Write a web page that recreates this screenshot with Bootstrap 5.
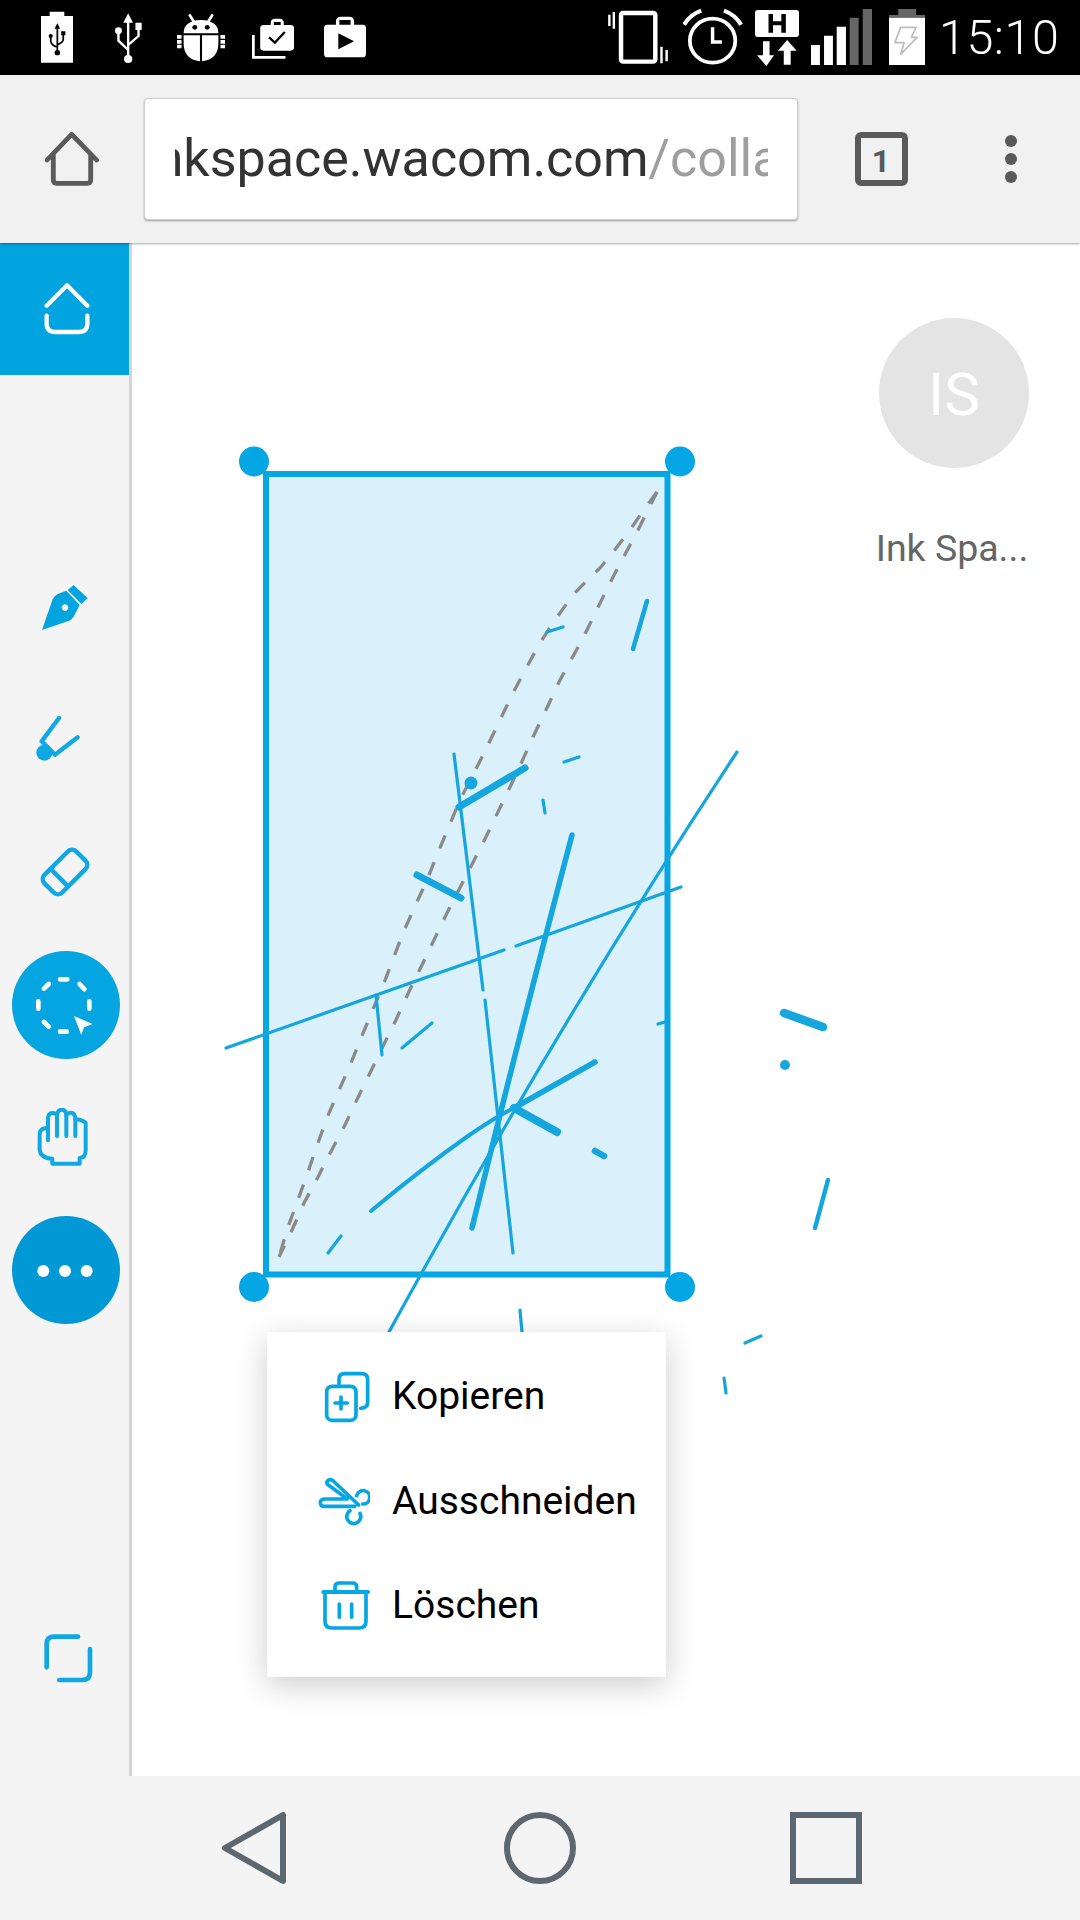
<!doctype html>
<html lang="de">

<head>
  <meta charset="utf-8">
  <meta name="viewport" content="width=device-width, initial-scale=1">
  <title>Ink Space</title>
  <link href="https://cdn.jsdelivr.net/npm/bootstrap@5.3.0/dist/css/bootstrap.min.css" rel="stylesheet">
  <style>
    body {
      font-family: Roboto, "Liberation Sans", sans-serif;
      background-color: #fff;
      width: 1080px;
      height: 1920px;
      overflow: hidden;
    }

    svg { display: block; flex-shrink: 0; }

    /* status bar */
    .status-strip { height: 75px; background-color: #000; color: #fff; }
    .sb-batt { margin-left: 41px; }
    .sb-usb { margin-left: 42px; }
    .sb-bug { margin-left: 35px; }
    .sb-check { margin-left: 27px; }
    .sb-play { margin-left: 30px; }
    .sb-vib { margin-left: 242px; }
    .sb-alarm { margin-left: 15px; }
    .sb-data { margin-left: 12.5px; }
    .sb-signal { margin-left: 12px; }
    .sb-charge { margin-left: 17px; }
    .clock-text { margin-left: 14px; font-size: 48.5px; font-weight: 300; line-height: 75px; letter-spacing: .5px; }

    /* browser toolbar */
    .chrome-bar {
      height: 168px;
      background-color: #f1f1f1;
      box-shadow: 0 1px 2px rgba(0, 0, 0, .35);
      z-index: 2;
    }
    .bar-home { margin-left: 45px; }
    .url-box {
      width: 654.5px;
      height: 122px;
      margin-left: 44.5px;
      padding: 0 29px 0 30.5px;
      background-color: #fff;
      border: 1px solid #cfcfcf;
      border-radius: 4px;
      box-shadow: 0 1px 2px rgba(0, 0, 0, .35);
      font-size: 52px;
      color: #333;
    }
    .url-clip { line-height: 120px; white-space: nowrap; }
    .url-scroll { margin-left: -33px; }
    .url-path { color: #9e9e9e; }
    .bar-tabs { margin-left: 57px; }
    .bar-dots { margin-left: 97px; }

    /* work area */
    .work-area { height: 1533px; }
    .tool-rail {
      width: 132px;
      background-color: #f4f4f4;
      border-right: 3px solid #d6d6d6;
    }
    .rail-home { height: 132px; padding-left: 4px; background-color: #02a4df; }
    .rail-tools { margin-top: 166px; }
    .rail-slot { height: 132.5px; }
    .rail-shift-round { padding-left: 3px; }
    .rail-shift-brush { padding-right: 12px; }
    .rail-shift-hand { padding-right: 3px; }
    .rail-bottom { margin-bottom: 93px; padding-left: 8px; }
    .ink-stage { width: 948px; }
    .ink-layer { position: absolute; left: 0; top: 0; }
    .ink-soft { filter: blur(.6px); }
    .profile-box { width: 150px; margin: 75px 51px 0 auto; position: relative; }
    .profile-disc { width: 150px; height: 150px; padding-top: 4px; background-color: #e4e4e4; color: #fff; font-size: 60px; }
    .profile-name { margin: 57px 0 0 -4px; font-size: 37.5px; line-height: 46px; color: #666; white-space: nowrap; }

    /* selection menu */
    .sel-menu {
      position: absolute;
      left: 135px;
      top: 1089px;
      width: 399px;
      height: 345px;
      padding: 12px 0 19px;
      background-color: #fff;
      box-shadow: 0 8px 30px rgba(0, 0, 0, .2);
    }
    .sel-item {
      height: 105px;
      padding: 0 0 0 48px;
      gap: 22px;
      border: 0;
      background: transparent;
      font-size: 39px;
      color: #000;
    }

    /* android nav */
    .nav-strip { height: 144px; background-color: #f4f4f4; gap: 214px; }
  </style>
</head>

<body>
  <!-- Status bar -->
  <div class="status-strip d-flex align-items-center">
    <svg class="sb-batt" width="32" height="75" viewBox="120 0 92 225" preserveAspectRatio="none">
      <path fill="#fff" d="M120 48H145V35H187V48H212V188H120Z"/>
      <path fill="none" stroke="#000" stroke-width="5" d="M167 85V155M148 110V122Q148 134 167 142M184 100V118Q184 128 167 134"/>
      <path d="M167 70l8 16h-16zM178 94h12v12h-12z"/><circle cx="148" cy="108" r="6"/><circle cx="167" cy="158" r="8"/>
    </svg>
    <svg class="sb-usb" width="27" height="75" viewBox="335 0 78 225" preserveAspectRatio="none">
      <g fill="#fff"><path d="M373 40l14 28h-28zM394 68h18v22h-18z"/><circle cx="345" cy="92" r="10"/><circle cx="373" cy="177" r="12"/></g>
      <path fill="none" stroke="#fff" stroke-width="7" d="M373 60V175M345 95V122L373 150M403 85V108L373 135"/>
    </svg>
    <svg class="sb-bug" width="48" height="75" viewBox="515 0 138 225" preserveAspectRatio="none">
      <g fill="#fff">
        <path d="M534 100Q534 62 584 60Q634 62 634 100Z"/>
        <path d="M534 106H581V184Q534 178 534 130ZM587 106H634V130Q634 178 587 184Z"/>
        <path d="M515 105h13v11h-13zM515 120h13v11h-13zM515 134h13v11h-13zM640 105h13v11h-13zM640 120h13v11h-13zM640 134h13v11h-13z"/>
      </g>
      <path stroke="#fff" stroke-width="8" stroke-linecap="round" d="M552 46L564 66M616 46L604 66"/>
      <circle cx="566" cy="82" r="7"/><circle cx="602" cy="82" r="7"/>
    </svg>
    <svg class="sb-check" width="42" height="75" viewBox="732 0 123 225" preserveAspectRatio="none">
      <path fill="none" stroke="#fff" stroke-width="8" d="M736 105V172H830"/>
      <path fill="#fff" d="M766 75H787V68Q787 56 800 56H812Q825 56 825 68V75H845Q855 75 855 85V142Q855 152 845 152H766Q756 152 756 142V85Q756 75 766 75ZM796 75H816V66H796Z" fill-rule="evenodd"/>
      <path fill="none" stroke="#000" stroke-width="7" d="M782 112L799 128L828 96"/>
    </svg>
    <svg class="sb-play" width="42" height="75" viewBox="940 0 123 225" preserveAspectRatio="none">
      <path fill="#fff" fill-rule="evenodd" d="M950 74H975V64Q975 50 990 50H1014Q1028 50 1028 64V74H1053Q1063 74 1063 84V161Q1063 172 1053 172H950Q940 172 940 161V84Q940 74 950 74ZM985 74H1018V60H985Z"/>
      <path d="M982 100L1028 124L982 148Z"/>
    </svg>

    <svg class="sb-vib" width="60" height="75" viewBox="197 0 175 225" preserveAspectRatio="none">
      <rect x="235" y="39" width="100" height="146" rx="6" fill="none" stroke="#fff" stroke-width="13"/>
      <path stroke="#fff" stroke-width="7" d="M201 44V78M214 36V86M353 140V190M368 150V184"/>
    </svg>
    <svg class="sb-alarm" width="59.5" height="75" viewBox="415 0 173 225" preserveAspectRatio="none">
      <circle cx="501" cy="122" r="66" fill="none" stroke="#fff" stroke-width="11"/>
      <path fill="none" stroke="#fff" stroke-width="10" d="M501 82V126H528"/>
      <path fill="none" stroke="#fff" stroke-width="12" d="M418 74Q436 44 468 32M534 32Q566 44 584 74"/>
    </svg>
    <svg class="sb-data" width="44" height="75" viewBox="625 0 127 225" preserveAspectRatio="none">
      <rect x="625" y="30" width="127" height="81" rx="8" fill="#fff"/>
      <path d="M664 42h13v22h24v-22h13v56h-13v-22h-24v22h-13z"/>
      <path fill="#fff" d="M648 124h19v42h13l-22 32-27-32h17zM708 194v-42h-17l27-32 27 32h-17v42z"/>
    </svg>
    <svg class="sb-signal" width="61" height="75" viewBox="787 0 178 225" preserveAspectRatio="none">
      <path fill="#fff" d="M787 135h26v60h-26zM825 107h26v88h-26zM862 80h27v115h-27z"/>
      <path fill="#666" d="M900 53h26v142h-26zM938 27h27v168h-27z"/>
    </svg>
    <svg class="sb-charge" width="36" height="75" viewBox="1013 0 105 225" preserveAspectRatio="none">
      <path fill="#666" d="M1040 27h52v18h26v8h-105v-8h27z"/>
      <path fill="#fff" d="M1013 53h105v142h-105z"/>
      <path fill="none" stroke="#bdbdbd" stroke-width="5" stroke-linejoin="round" d="M1047 82H1092L1078 112H1095L1047 163L1057 128H1030Z"/>
    </svg>
    <span class="clock-text">15:10</span>
  </div>

  <!-- Browser toolbar -->
  <div class="chrome-bar d-flex align-items-center position-relative">
    <svg class="bar-home" width="54" height="54" viewBox="132 396 156 162" preserveAspectRatio="none">
      <path fill="none" stroke="#5a5a5a" stroke-width="14" stroke-linejoin="round" stroke-linecap="round" d="M138 480L209 403L281 480M156 465V540Q156 550 166 550H254Q264 550 264 540V465"/>
    </svg>
    <div class="url-box">
      <div class="url-clip overflow-hidden"><div class="url-scroll">inkspace.wacom.com<span class="url-path">/collaboration</span></div></div>
    </div>
    <svg class="bar-tabs" width="53" height="54" viewBox="0 0 53 54">
      <rect x="3" y="3" width="47" height="48" rx="3" fill="none" stroke="#5a5a5a" stroke-width="6"/>
      <text x="26" y="40" text-anchor="middle" font-family="Roboto, sans-serif" font-size="32" font-weight="700" fill="#5a5a5a">1</text>
    </svg>
    <svg class="bar-dots" width="12" height="48" viewBox="0 0 12 48" fill="#5a5a5a">
      <circle cx="6" cy="6" r="6"/><circle cx="6" cy="24" r="6"/><circle cx="6" cy="42" r="6"/>
    </svg>
  </div>

  <div class="work-area d-flex">
    <!-- Tool rail -->
    <div class="tool-rail d-flex flex-column flex-shrink-0">
      <div class="rail-home d-flex align-items-center justify-content-center">
        <svg width="46" height="54" viewBox="130 135 140 160" fill="none" stroke="#fff" stroke-width="13" stroke-linecap="round">
          <path stroke-linejoin="round" d="M138 205L200 143L262 205M138 235V260Q138 285 165 285H235Q262 285 262 260V235"/>
        </svg>
      </div>
      <div class="rail-tools d-flex flex-column">
        <div class="rail-slot d-flex align-items-center justify-content-center">
          <svg width="48" height="46" viewBox="120 1032 144 138" fill="#02a4df">
            <path fill-rule="evenodd" d="M123 1170L155 1078Q159 1068 170 1062L196 1052L236 1095L218 1130Q212 1140 200 1144ZM192 1093a10 10 0 1 0 .1 0Z"/>
            <path d="M218 1035L260 1075L241 1092L200 1050Z"/>
          </svg>
        </div>
        <div class="rail-slot rail-shift-brush d-flex align-items-center justify-content-center">
          <svg width="48" height="48" viewBox="50 84 144 144" fill="none" stroke="#10a8e2" stroke-width="13" stroke-linecap="round" stroke-linejoin="round">
            <path d="M122 90L70 160L110 200L178 148"/>
            <circle cx="78" cy="194" r="24" fill="#10a8e2" stroke="none"/>
          </svg>
        </div>
        <div class="rail-slot d-flex align-items-center justify-content-center">
          <svg width="54" height="54" viewBox="0 0 54 54" fill="none" stroke="#10a8e2" stroke-width="4.5">
            <g transform="translate(27 27) rotate(-45)">
              <rect x="-22.5" y="-12.5" width="45" height="25" rx="6"/>
              <path d="M-8 -13V13"/>
            </g>
          </svg>
        </div>
        <div class="rail-slot rail-shift-round d-flex align-items-center justify-content-center">
          <svg width="108" height="108" viewBox="36 93 324 324">
            <circle cx="198" cy="255" r="162" fill="#04a5e0"/>
            <path fill="none" stroke="#fff" stroke-width="14" stroke-linecap="round" d="M180 178H202M239 192L253 208M268 244V266M180 335H200M132 306L146 320M115 244V266M132 206L146 192"/>
            <path fill="#fff" d="M222 288L278 312L252 322L244 345Z"/>
          </svg>
        </div>
        <div class="rail-slot rail-shift-hand d-flex align-items-center justify-content-center">
          <svg width="52" height="58" viewBox="22 28 156 174" fill="none" stroke="#10a8e2" stroke-width="12" stroke-linecap="round" stroke-linejoin="round">
            <path d="M68 195V180Q30 178 30 150V108Q30 88 52 88M55 125V62Q55 43 68 43Q78 43 82 50Q84 33 96 33Q108 33 110 48Q116 42 124 42Q136 42 137 62Q150 60 168 72V155Q168 178 150 178V195H68"/>
            <path d="M82 50V112M110 50V112M137 62V112"/>
          </svg>
        </div>
        <div class="rail-slot rail-shift-round d-flex align-items-center justify-content-center">
          <svg width="108" height="108" viewBox="36 885 324 324">
            <circle cx="198" cy="1047" r="162" fill="#0099d6"/>
            <g fill="#fff"><circle cx="130" cy="1050" r="18"/><circle cx="195" cy="1050" r="18"/><circle cx="260" cy="1050" r="18"/></g>
          </svg>
        </div>
      </div>
      <div class="rail-bottom mt-auto d-flex justify-content-center">
        <svg width="49" height="49" viewBox="40 35 147 147" fill="none" stroke="#10a8e2" stroke-width="14" stroke-linecap="round">
          <path d="M48 135V65Q48 43 70 43H142M178 80V150Q178 173 155 173H86"/>
        </svg>
      </div>
    </div>

    <!-- Drawing canvas -->
    <div class="ink-stage position-relative flex-grow-1 d-flex align-items-start">
      <svg class="ink-layer" width="948" height="1533" viewBox="132 243 948 1533" fill="none" stroke-linecap="round">
        <rect x="266" y="474" width="401.5" height="800.5" fill="#daf1fb" stroke="#05a6e2" stroke-width="6"/>
        <g class="ink-soft" stroke="#8a8a8a" stroke-width="3.3" stroke-dasharray="14 15" stroke-linecap="butt">
          <path d="M657 492Q642 512 630 530Q615 550 600 568Q586 581 573 595Q556 618 540 643Q526 668 513 693Q500 720 487 747Q474 773 460 800Q443 840 427 880Q415 906 403 933L384 983Q367 1023 351 1063Q340 1088 329 1113Q318 1142 308 1172Q298 1200 288 1227L279 1257"/>
          <path d="M657 492Q648 510 638 530L613 577Q600 603 587 630Q574 655 560 680Q547 708 533 737Q522 762 510 787L483 843Q465 878 447 913L421 967Q408 993 396 1020Q383 1046 370 1073Q357 1099 345 1125Q331 1151 318 1177Q311 1190 304 1203L292 1230L279 1257"/>
        </g>
        <g class="ink-soft" stroke="#14a6dd">
          <path stroke-width="3.2" d="M454 754L483 990M485 1000L513 1253"/>
          <path stroke-width="7" d="M459 807L525 768"/>
          <path stroke-width="7" d="M417 875L461 898"/>
          <path stroke-width="3.2" d="M547 632L563 627M564 762L579 757M543 800L545 813"/>
          <path stroke-width="4.5" d="M633 649L647 601"/>
          <path stroke-width="5.5" d="M572 835Q518 1040 472 1228"/>
          <path stroke-width="3.2" d="M737 752Q560 1020 389 1332"/>
          <path stroke-width="3.2" d="M681 887L516 946M504 950L226 1048"/>
          <path stroke-width="3.2" d="M376 995L382 1055M402 1048L432 1023M328 1253L341 1236"/>
          <path stroke-width="5.5" d="M595 1062L514 1108"/>
          <path stroke-width="4" d="M514 1108Q497 1116 468 1136Q420 1170 371 1211"/>
          <path stroke-width="8" d="M514 1108L557 1132"/>
          <path stroke-width="6.5" d="M595 1151L604 1156"/>
          <path stroke-width="3.2" d="M658 1024L665 1022M520 1310L522 1332M745 1343L761 1336M724 1378L726 1393"/>
          <path stroke-width="8.5" d="M784 1013L823 1027"/>
          <path stroke-width="4.5" d="M828 1180L815 1228"/>
          <circle cx="471" cy="783" r="6.5" fill="#14a6dd" stroke="none"/>
          <circle cx="785" cy="1065" r="5" fill="#14a6dd" stroke="none"/>
        </g>
        <g fill="#04a6e3">
          <circle cx="254" cy="461.5" r="15"/><circle cx="680" cy="461.5" r="15"/>
          <circle cx="254" cy="1287" r="15"/><circle cx="680" cy="1287" r="15"/>
        </g>
      </svg>

      <div class="profile-box text-center">
        <div class="profile-disc rounded-circle d-flex align-items-center justify-content-center">IS</div>
        <div class="profile-name">Ink Spa...</div>
      </div>

      <!-- Selection menu -->
      <div class="sel-menu list-group list-group-flush">
        <div class="sel-item list-group-item d-flex align-items-center">
          <svg width="55" height="55" viewBox="225 178 165 165" fill="none" stroke="#04a6e3" stroke-width="11" stroke-linecap="round">
            <rect x="260" y="230" width="88" height="102" rx="16"/>
            <path d="M303 262V298M285 280H322M297 222V208Q297 192 314 192H365Q383 192 383 210V278Q383 295 362 296"/>
          </svg>
          <span>Kopieren</span>
        </div>
        <div class="sel-item list-group-item d-flex align-items-center">
          <svg width="55" height="55" viewBox="225 507 165 165" fill="none" stroke="#04a6e3" stroke-width="11" stroke-linecap="round" stroke-linejoin="round">
            <path d="M345 604H255Q241 604 241 593Q241 582 255 582H322L262 538Q258 530 266 525Q273 522 280 528L356 600"/>
            <path d="M350 572A20 20 0 1 1 368 597"/>
            <path d="M330 617A21 21 0 1 0 360 625"/>
          </svg>
          <span>Ausschneiden</span>
        </div>
        <div class="sel-item list-group-item d-flex align-items-center">
          <svg width="55" height="55" viewBox="225 810 165 165" fill="none" stroke="#04a6e3" stroke-width="11" stroke-linecap="round">
            <path stroke-width="12" d="M250 852H384"/>
            <path d="M285 848V836Q285 825 298 825H337Q350 825 350 836V848M255 860V940Q255 960 275 960H358Q378 960 378 940V860M298 888V928M335 888V928"/>
          </svg>
          <span>Löschen</span>
        </div>
      </div>
    </div>
  </div>

  <!-- Android navigation -->
  <div class="nav-strip d-flex align-items-center justify-content-center">
    <svg width="72" height="72" viewBox="0 0 72 72" fill="none" stroke="#5c6770" stroke-width="6" stroke-linejoin="round">
      <path d="M65 3V69L7 36Z"/>
    </svg>
    <svg width="72" height="72" viewBox="0 0 72 72" fill="none" stroke="#5c6770" stroke-width="6">
      <circle cx="36" cy="36" r="33"/>
    </svg>
    <svg width="72" height="72" viewBox="0 0 72 72" fill="none" stroke="#5c6770" stroke-width="6">
      <rect x="3" y="3" width="66" height="66"/>
    </svg>
  </div>

  <script src="https://cdn.jsdelivr.net/npm/bootstrap@5.3.0/dist/js/bootstrap.bundle.min.js"></script>
</body>

</html>
